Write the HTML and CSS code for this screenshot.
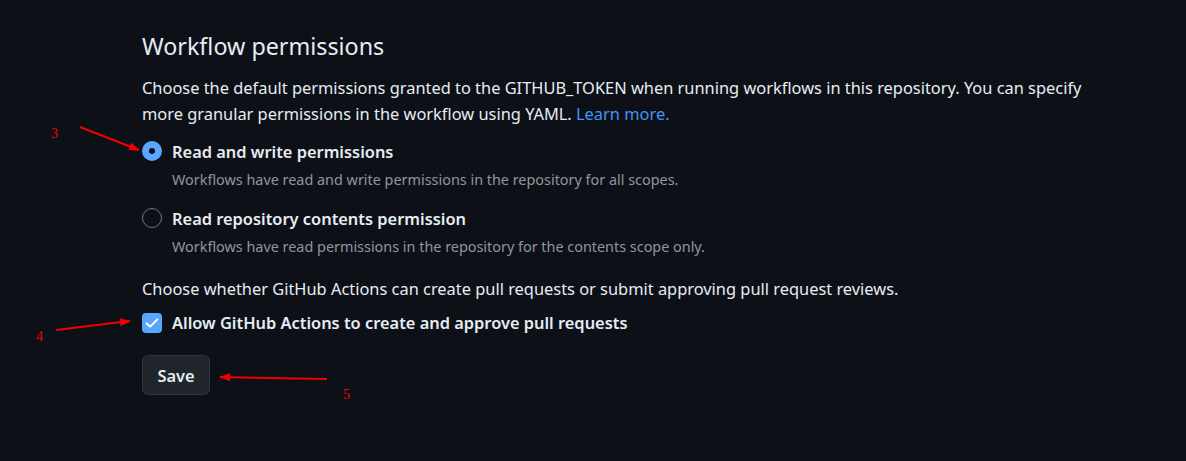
FILE: index.html
```html
<!DOCTYPE html>
<html lang="en">
<head>
<meta charset="utf-8">
<title>Workflow permissions</title>
<link rel="stylesheet" href="styles.css">
</head>
<body>
<div class="page">
  <section class="panel">
    <h2 class="title">Workflow permissions</h2>
    <p class="lead">Choose the default permissions granted to the GITHUB_TOKEN when running workflows in this repository. You can specify more granular permissions in the workflow using YAML. <a class="link" href="#">Learn more.</a></p>

    <div class="option">
      <span class="radio radio-on"></span>
      <div class="option-text">
        <div class="option-label">Read and write permissions</div>
        <div class="option-desc">Workflows have read and write permissions in the repository for all scopes.</div>
      </div>
    </div>

    <div class="option">
      <span class="radio"></span>
      <div class="option-text">
        <div class="option-label">Read repository contents permission</div>
        <div class="option-desc">Workflows have read permissions in the repository for the contents scope only.</div>
      </div>
    </div>

    <p class="lead second">Choose whether GitHub Actions can create pull requests or submit approving pull request reviews.</p>

    <div class="check-row">
      <span class="checkbox">
        <svg width="16" height="16" viewBox="0 0 16 16"><path d="M2.6 8.4 L6.2 11.6 L13.4 4.4" fill="none" stroke="#ffffff" stroke-width="2" stroke-linecap="round" stroke-linejoin="round"/></svg>
      </span>
      <span class="option-label">Allow GitHub Actions to create and approve pull requests</span>
    </div>

    <button class="btn">Save</button>
  </section>

  <svg class="annot" width="1186" height="461" viewBox="0 0 1186 461">
    <defs>
      <marker id="ah" markerWidth="11" markerHeight="8" refX="10" refY="4" orient="auto" markerUnits="userSpaceOnUse">
        <path d="M0 0 L11 4 L0 8 Z" fill="#f00000"/>
      </marker>
    </defs>
    <line x1="80" y1="127" x2="139" y2="150" stroke="#f00000" stroke-width="2" marker-end="url(#ah)"/>
    <line x1="56" y1="330" x2="130" y2="321" stroke="#f00000" stroke-width="2" marker-end="url(#ah)"/>
    <line x1="327" y1="379" x2="220" y2="377" stroke="#f00000" stroke-width="2" marker-end="url(#ah)"/>
    <text x="51" y="138" class="num">3</text>
    <text x="36" y="341" class="num">4</text>
    <text x="343" y="399" class="num">5</text>
  </svg>
</div>
</body>
</html>
```

FILE: styles.css
```css
html, body {
  margin: 0;
  padding: 0;
  background: #0d1117;
}
.page {
  position: relative;
  width: 1186px;
  height: 461px;
  overflow: hidden;
  font-family: "Noto Sans", "Open Sans", sans-serif;
  color: #e6edf3;
}
.panel {
  padding: 30px 0 0 142px;
  width: 960px;
}
.title {
  margin: 0;
  font-size: 23.3px;
  font-weight: 400;
  line-height: 32px;
  color: #e6edf3;
}
.lead {
  margin: 13px 0 0;
  font-size: 16.4px;
  line-height: 26px;
  color: #e6edf3;
}
.lead.second {
  margin-top: 17px;
}
.link {
  color: #4493f8;
  text-decoration: none;
}
.option {
  display: flex;
  gap: 10px;
  margin-top: 11px;
}
.option + .option {
  margin-top: 13px;
}
.radio {
  flex: none;
  box-sizing: border-box;
  width: 20px;
  height: 20px;
  border-radius: 50%;
  border: 1px solid #6e7681;
  margin-top: 3px;
}
.radio-on {
  border: 7px solid #58a6ff;
  background: #0d1117;
}
.option-label {
  font-size: 16.4px;
  font-weight: 600;
  line-height: 28px;
  color: #e6edf3;
}
.option-desc {
  margin-top: 2px;
  font-size: 14.4px;
  line-height: 24px;
  color: #8d96a0;
}
.check-row {
  display: flex;
  align-items: center;
  gap: 10px;
  margin-top: 7px;
}
.checkbox {
  flex: none;
  width: 20px;
  height: 20px;
  border-radius: 4px;
  background: #58a6ff;
  display: flex;
  align-items: center;
  justify-content: center;
}
.btn {
  margin-top: 18px;
  display: block;
  box-sizing: border-box;
  width: 68px;
  height: 40px;
  border: 1px solid #30363d;
  border-radius: 6px;
  background: #21262d;
  color: #e6edf3;
  font-family: "Noto Sans", "Open Sans", sans-serif;
  font-size: 16.4px;
  font-weight: 600;
  padding: 0;
}
.annot {
  position: absolute;
  left: 0;
  top: 0;
  pointer-events: none;
}
.num {
  font-family: "Liberation Serif", serif;
  font-size: 14px;
  fill: #f00000;
}
```
